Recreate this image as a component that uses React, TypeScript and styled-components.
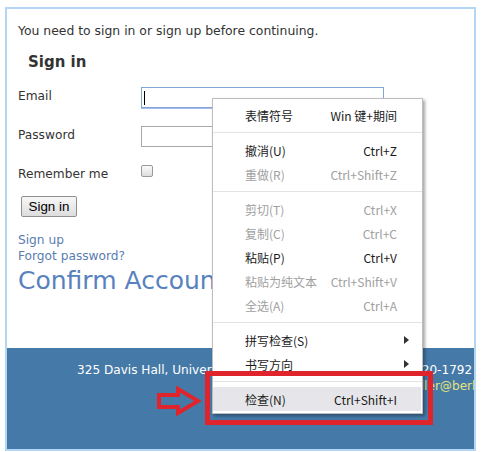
import styled, { createGlobalStyle, css } from 'styled-components';

const GlobalStyle = createGlobalStyle`
  html, body {
    margin: 0;
    padding: 0;
    background: #ffffff;
  }
  * {
    box-sizing: border-box;
  }
`;

const Page = styled.div`
  position: relative;
  width: 492px;
  height: 452px;
  padding: 7px 0 0 5px;
  overflow: hidden;
  font-family: 'DejaVu Sans', Verdana, sans-serif;
`;

const Frame = styled.div`
  width: 471px;
  height: 444px;
  border: 2px solid #b4d6f5;
  display: flex;
  flex-direction: column;
  background: #ffffff;
`;

const Main = styled.div`
  flex: 1;
  padding: 14px 0 0 11px;
  color: #333333;
`;

const Notice = styled.p`
  margin: 0;
  font-size: 12.4px;
  line-height: 16px;
`;

const Heading = styled.h2`
  margin: 13px 0 0 10px;
  font-size: 15px;
  line-height: 20px;
  font-weight: bold;
  color: #333333;
`;

const Row = styled.div<{ $top: number }>`
  display: flex;
  align-items: flex-start;
  margin-top: ${p => p.$top}px;
`;

const Label = styled.span`
  width: 123px;
  padding-top: 1px;
  font-size: 12.2px;
  line-height: 16px;
  color: #333333;
`;

const Field = styled.div<{ $focused?: boolean }>`
  width: 243px;
  height: 21px;
  border: 1px solid ${p => (p.$focused ? '#7fa6d6' : '#a9a9a9')};
  background: #ffffff;
  display: flex;
  align-items: center;
  padding-left: 2px;
  ${p =>
    p.$focused &&
    css`
      box-shadow: 0 1px 0 #a9b9ee;
    `}
`;

const Caret = styled.span`
  width: 1px;
  height: 14px;
  background: #000000;
`;

const Check = styled.span`
  width: 12px;
  height: 12px;
  border: 1px solid #9a9a9a;
  border-radius: 2px;
  background: linear-gradient(#fafafa, #dedede);
`;

const SubmitButton = styled.button`
  display: block;
  margin: 14px 0 0 3px;
  width: 56px;
  height: 21px;
  padding: 0;
  border: 1px solid #8f8f8f;
  border-radius: 2px;
  background: linear-gradient(#f7f7f7, #dddddd);
  font-family: 'Liberation Sans', Arial, sans-serif;
  font-size: 13.33px;
  color: #000000;
`;

const Links = styled.div`
  margin-top: 15px;
  display: flex;
  flex-direction: column;
`;

const TextLink = styled.a`
  font-size: 12.2px;
  line-height: 16px;
  color: #5a7db0;
  text-decoration: none;
`;

const Title = styled.h1`
  margin: 2px 0 0;
  font-size: 25px;
  line-height: 30px;
  font-weight: normal;
  color: #5882be;
  white-space: nowrap;
`;

const Footer = styled.footer`
  height: 101px;
  background: #4579a8;
  padding: 14px 0 0 70px;
  overflow: hidden;
  white-space: nowrap;
  font-size: 12.1px;
  line-height: 16px;
`;

const FooterLine = styled.div<{ $accent?: boolean; $indent?: number }>`
  color: ${p => (p.$accent ? '#e3e37c' : '#ffffff')};
  padding-left: ${p => p.$indent ?? 0}px;
`;

const Menu = styled.div`
  position: absolute;
  left: 212px;
  top: 98px;
  width: 211px;
  padding: 4px 0 2px;
  background: #ffffff;
  border: 1px solid #bdbdbd;
  box-shadow: 2px 2px 3px rgba(0, 0, 0, 0.35);
  font-family: 'Noto Sans CJK SC', 'Noto Sans', sans-serif;
  font-size: 12px;
  z-index: 2;
`;

const MenuItem = styled.div<{ $disabled?: boolean; $active?: boolean }>`
  display: flex;
  align-items: center;
  height: 24px;
  padding: 0 24px 0 32px;
  margin-right: 1px;
  color: ${p => (p.$disabled ? '#a0a0a0' : '#1a1a1a')};
  background: ${p => (p.$active ? '#e6e6ea' : 'transparent')};
`;

const ItemLabel = styled.span`
  flex: 1;
`;

const Shortcut = styled.span``;

const SubArrow = styled.span`
  width: 0;
  height: 0;
  border-left: 5px solid #333333;
  border-top: 4px solid transparent;
  border-bottom: 4px solid transparent;
  margin-right: -12px;
`;

const Separator = styled.div`
  height: 1px;
  margin: 5px 0;
  background: #e3e3e3;
`;

const Highlight = styled.div`
  position: absolute;
  left: 205px;
  top: 371px;
  width: 228px;
  height: 54px;
  border: 5px solid #e0242c;
  z-index: 3;
`;

const Pointer = styled.svg`
  position: absolute;
  left: 150px;
  top: 380px;
  z-index: 3;
`;

type Item = {
  label: string;
  shortcut?: string;
  disabled?: boolean;
  submenu?: boolean;
  active?: boolean;
};

const groups: Item[][] = [
  [{ label: '表情符号', shortcut: 'Win 键+期间' }],
  [
    { label: '撤消(U)', shortcut: 'Ctrl+Z' },
    { label: '重做(R)', shortcut: 'Ctrl+Shift+Z', disabled: true },
  ],
  [
    { label: '剪切(T)', shortcut: 'Ctrl+X', disabled: true },
    { label: '复制(C)', shortcut: 'Ctrl+C', disabled: true },
    { label: '粘贴(P)', shortcut: 'Ctrl+V' },
    { label: '粘贴为纯文本', shortcut: 'Ctrl+Shift+V', disabled: true },
    { label: '全选(A)', shortcut: 'Ctrl+A', disabled: true },
  ],
  [
    { label: '拼写检查(S)', submenu: true },
    { label: '书写方向', submenu: true },
  ],
  [{ label: '检查(N)', shortcut: 'Ctrl+Shift+I', active: true }],
];

const App = () => {
  return (
    <Page>
      <GlobalStyle />
      <Frame>
        <Main>
          <Notice>You need to sign in or sign up before continuing.</Notice>
          <Heading>Sign in</Heading>
          <Row $top={15}>
            <Label>Email</Label>
            <Field $focused>
              <Caret />
            </Field>
          </Row>
          <Row $top={18}>
            <Label>Password</Label>
            <Field />
          </Row>
          <Row $top={18}>
            <Label>Remember me</Label>
            <Check />
          </Row>
          <SubmitButton>Sign in</SubmitButton>
          <Links>
            <TextLink href="#">Sign up</TextLink>
            <TextLink href="#">Forgot password?</TextLink>
          </Links>
          <Title>Confirm Account</Title>
        </Main>
        <Footer>
          <FooterLine>
            325 Davis Hall, University of California, Berkeley, CA 94720-1792
          </FooterLine>
          <FooterLine $accent $indent={258}>
            seismo-controller@berkeley.edu
          </FooterLine>
        </Footer>
      </Frame>

      <Menu>
        {groups.map((group, gi) => (
          <div key={gi}>
            {gi > 0 && <Separator />}
            {group.map(item => (
              <MenuItem
                key={item.label}
                $disabled={item.disabled}
                $active={item.active}
              >
                <ItemLabel>{item.label}</ItemLabel>
                {item.shortcut && <Shortcut>{item.shortcut}</Shortcut>}
                {item.submenu && <SubArrow />}
              </MenuItem>
            ))}
          </div>
        ))}
      </Menu>

      <Highlight />
      <Pointer width="56" height="42" viewBox="0 0 56 42">
        <polygon
          points="9,15 28,15 28,9 48,21 28,33 28,27 9,27"
          fill="none"
          stroke="#e0242c"
          strokeWidth="4"
          strokeLinejoin="miter"
        />
      </Pointer>
    </Page>
  );
};

export default App;
